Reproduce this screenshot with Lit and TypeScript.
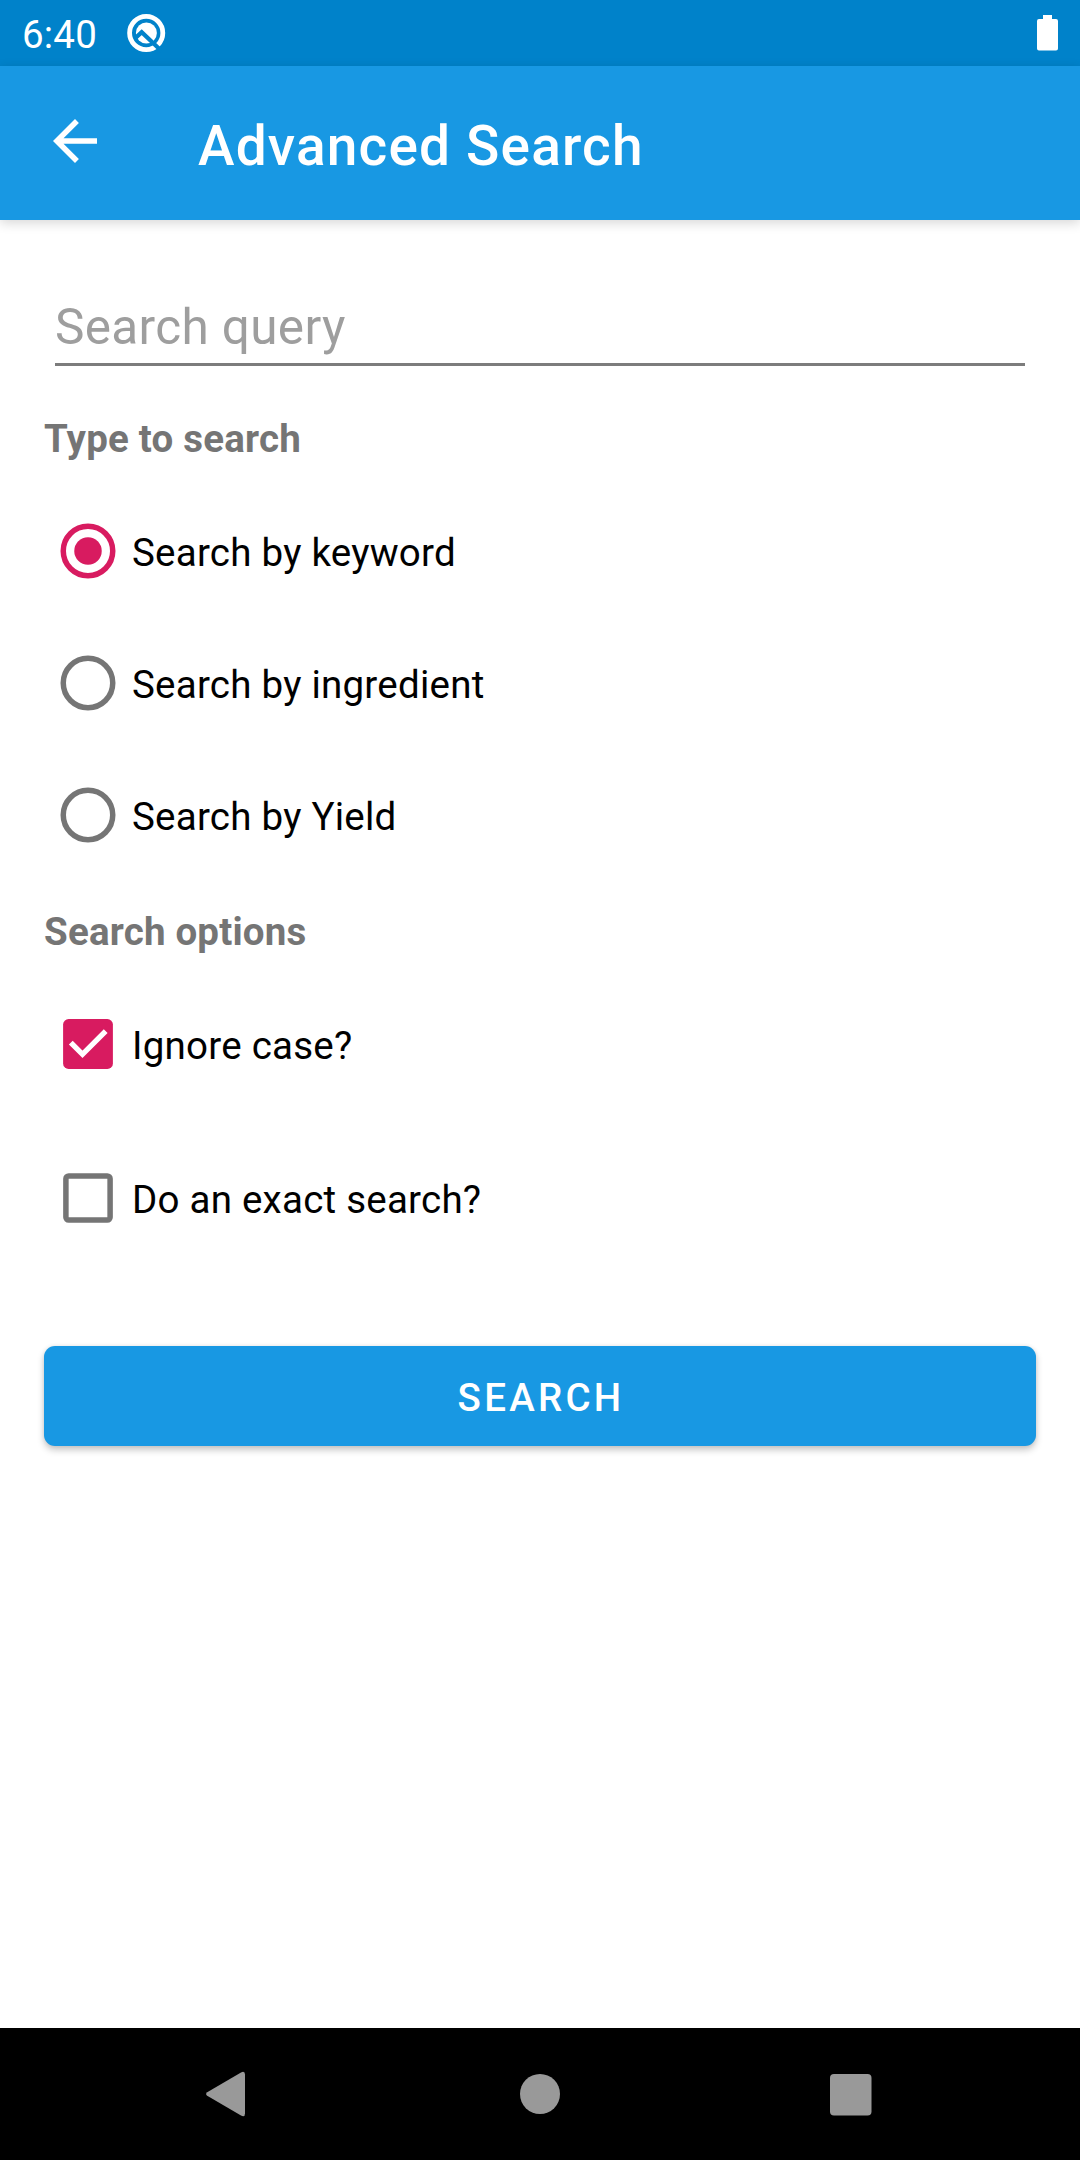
import { LitElement, html, css, svg } from "lit";
import { customElement, state } from "lit/decorators.js";

const radioOptions = ["Search by keyword", "Search by ingredient", "Search by Yield"];

@customElement("app-root")
export class AppRoot extends LitElement {
  @state() private selected = 0;
  @state() private checks = [
    { label: "Ignore case?", on: true },
    { label: "Do an exact search?", on: false },
  ];

  static styles = css`
    :host {
      display: flex;
      flex-direction: column;
      width: 1080px;
      height: 2160px;
      background: #fff;
      overflow: hidden;
      font-family: Roboto, sans-serif;
      font-size: 38.5px;
      line-height: 46px;
      color: #000;
    }
    * { box-sizing: border-box; }
    svg { display: block; flex: none; }
    .status {
      display: flex;
      align-items: center;
      height: 66px;
      padding: 0 22px;
      background: #0082ca;
      color: #fff;
    }
    .clock { width: 102px; padding-top: 4px; white-space: nowrap; letter-spacing: 0.2px; }
    .spacer { flex: 1; }
    .toolbar {
      display: flex;
      align-items: center;
      height: 154px;
      flex: none;
      padding-left: 42px;
      background: #1898e3;
      color: #fff;
      box-shadow: 0 3px 11px rgba(0, 0, 0, 0.16);
    }
    .toolbar svg { margin-top: -4px; }
    .title {
      margin: 0 0 0 90px;
      padding-top: 6px;
      font-size: 55px;
      line-height: 66px;
      font-weight: 500;
      letter-spacing: 1.18px;
    }
    .content { flex: 1; padding: 44px 44px 0; }
    .field {
      display: block;
      width: 970px;
      height: 102px;
      margin: 0 11px;
      padding: 26px 0 0;
      border: 0;
      border-bottom: 3px solid #7c7c7c;
      outline: 0;
      background: none;
      font: 49.5px/60px Roboto, sans-serif;
      letter-spacing: 0.34px;
      color: #000;
    }
    .field::placeholder { color: #9e9e9e; opacity: 1; }
    .heading { margin: 0; font-size: 38.5px; font-weight: 700; color: #757575; height: 46px; letter-spacing: 0.2px; }
    .type { margin-top: 50px; margin-bottom: 23px; }
    .options { margin-top: 28px; margin-bottom: 12px; }
    .row { display: flex; align-items: center; height: 132px; }
    .row.tall { height: 154px; }
    .row span { padding-top: 4px; letter-spacing: 0.24px; }
    .button {
      display: flex;
      align-items: center;
      justify-content: center;
      width: 992px;
      height: 100px;
      margin-top: 71px;
      padding: 4px 0 0 2px;
      border: 0;
      border-radius: 11px;
      background: #1898e3;
      color: #fff;
      font: 500 38.5px/46px Roboto, sans-serif;
      letter-spacing: 3.25px;
      box-shadow: 0 4px 7px rgba(0, 0, 0, 0.22), 0 0 4px rgba(0, 0, 0, 0.08);
    }
    .nav {
      display: flex;
      align-items: center;
      justify-content: space-between;
      height: 132px;
      flex: none;
      padding: 0 200px 0 196px;
      background: #000;
    }
  `;

  private radio(on: boolean) {
    const color = on ? "#d81b60" : "#757575";
    return html`<svg width="88" height="88" viewBox="0 0 88 88">
      <circle cx="44" cy="44" r="24.75" fill="none" stroke=${color} stroke-width="5.5" />
      ${on ? svg`<circle cx="44" cy="44" r="13.75" fill=${color} />` : ""}
    </svg>`;
  }

  private checkbox(on: boolean) {
    return html`<svg width="88" height="88" viewBox="0 0 88 88">
      ${on
        ? svg`<rect x="19.1" y="19.1" width="49.8" height="49.8" rx="5.5" fill="#d81b60" />
            <path d="M26.8 42.6L38.5 54.3L61.7 31.1" fill="none" stroke="#fff" stroke-width="5.4" />`
        : svg`<rect x="21.9" y="21.9" width="44.2" height="44.2" rx="2.8" fill="none" stroke="#757575" stroke-width="5.5" />`}
    </svg>`;
  }

  private toggle(index: number) {
    this.checks = this.checks.map((c, i) => (i === index ? { ...c, on: !c.on } : c));
  }

  render() {
    return html`
      <div class="status">
        <span class="clock">6:40</span>
        <svg width="44" height="44" viewBox="0 0 44 44">
          <circle cx="22.2" cy="22" r="16.6" fill="none" stroke="#fff" stroke-width="4.8" />
          <circle cx="22.4" cy="22" r="10.5" fill="#fff" />
          <path d="M11 27.4L17.7 21.2L37.5 40" fill="none" stroke="#0082ca" stroke-width="4.2" />
        </svg>
        <div class="spacer"></div>
        <svg width="22" height="36" viewBox="0 0 22 36">
          <path d="M7 0H16V4H20Q22 4 22 6V33.5Q22 35.5 20 35.5H3Q1 35.5 1 33.5V6Q1 4 3 4H7Z" fill="#fff" />
        </svg>
      </div>
      <header class="toolbar">
        <svg width="66" height="66" viewBox="0 0 24 24">
          <path d="M20 11H7.83l5.59-5.59L12 4l-8 8 8 8 1.41-1.41L7.83 13H20z" fill="#fff" />
        </svg>
        <h1 class="title">Advanced Search</h1>
      </header>
      <main class="content">
        <input class="field" placeholder="Search query" />
        <h2 class="heading type">Type to search</h2>
        ${radioOptions.map(
          (label, i) => html`<div class="row" @click=${() => (this.selected = i)}>
            ${this.radio(this.selected === i)}<span>${label}</span>
          </div>`
        )}
        <h2 class="heading options">Search options</h2>
        ${this.checks.map(
          (c, i) => html`<div class="row tall" @click=${() => this.toggle(i)}>
            ${this.checkbox(c.on)}<span>${c.label}</span>
          </div>`
        )}
        <button class="button">SEARCH</button>
      </main>
      <nav class="nav">
        <svg width="60" height="60" viewBox="0 0 60 60">
          <path d="M11.2 28.2L45 8.4Q49 6.6 49 10.5V49.5Q49 53.4 45 51.6L11.2 31.8Q9 30 11.2 28.2Z" fill="#999" />
        </svg>
        <svg width="60" height="60" viewBox="0 0 60 60">
          <circle cx="32" cy="30" r="20" fill="#999" />
        </svg>
        <svg width="60" height="60" viewBox="0 0 60 60">
          <rect x="10" y="10" width="41.5" height="41.5" rx="4" fill="#999" />
        </svg>
      </nav>
    `;
  }
}
